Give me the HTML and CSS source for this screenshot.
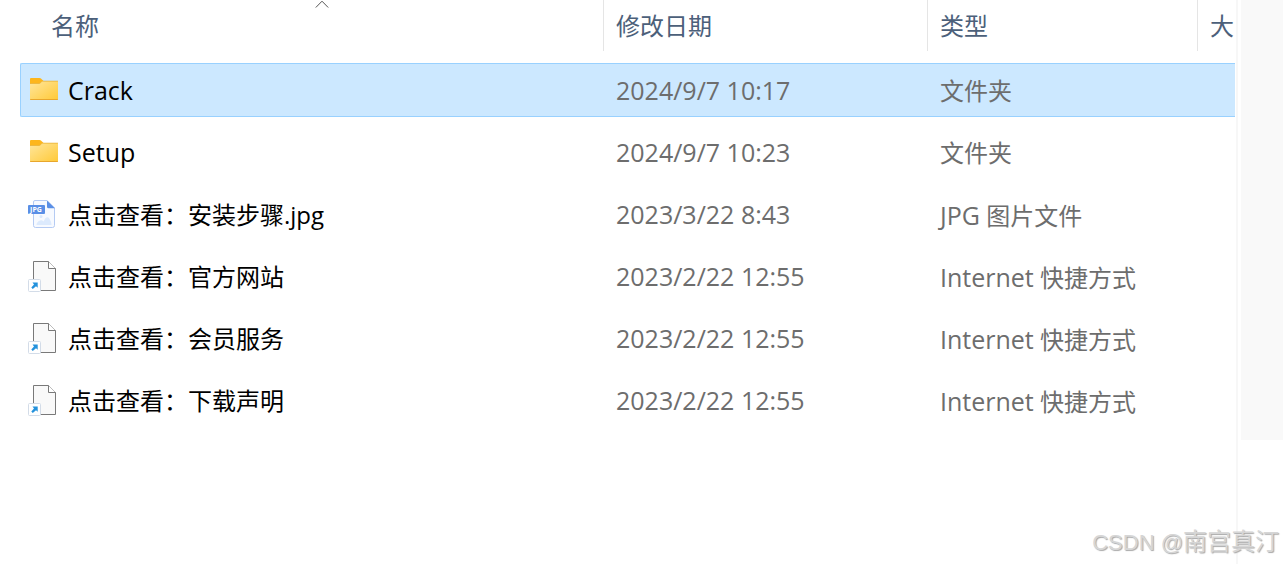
FILE: index.html
```html
<!DOCTYPE html>
<html lang="zh-CN">
<head>
    <meta charset="UTF-8">
    <meta name="viewport" content="width=device-width, initial-scale=1.0">
    <title>文件列表</title>
    <link rel="stylesheet" href="styles.css">
</head>
<body>
    <!-- shared icons -->
    <svg class="icon-defs" aria-hidden="true">
        <defs>
            <linearGradient id="folder-fill" x1="0" y1="0" x2="1" y2="1">
                <stop offset="0" stop-color="#ffe69c"/>
                <stop offset="1" stop-color="#ffc937"/>
            </linearGradient>
        </defs>
        <symbol id="icon-folder" viewBox="0 0 32 32">
            <path d="M2 5q0-1 1-1h8.500q1 0 1.700.700L15.500 7 13 10H2z" fill="#fdb61c"/>
            <path d="M2 10q0-.600.600-.600h8.400q.700 0 1.200-.500l1.500-1.300q.500-.500 1.200-.500H29.400q.600 0 .600.600V25q0 1-1 1H3q-1 0-1-1z" fill="url(#folder-fill)"/>
            <path d="M2 9.500h9q.700 0 1.200-.500l1.500-1.400q.500-.400 1.200-.400H30" fill="none" stroke="#e9b23a" stroke-width=".8"/>
            <path d="M2.200 25.500H29.800" stroke="#e8a62c"/>
        </symbol>
        <symbol id="icon-shortcut" viewBox="0 0 32 32">
            <path d="M5.500 1.500H20.500L27.500 8.500V30.500H5.500z" fill="#f9f9f9" stroke="#797979"/>
            <path d="M20.500 1.500V8.500H27.500" fill="#fff" stroke="#797979"/>
            <rect x=".5" y="19.500" width="12" height="12" rx="1" fill="#fff" stroke="#d3dce8"/>
            <path d="M4.500 22.500H9.700V27.700L8 26.200 4.800 29 3.300 27.600 6 24.500z" fill="#2492dc"/>
        </symbol>
    </svg>

    <div class="window">
        <main class="explorer">
            <table class="file-table">
                <colgroup>
                    <col>
                    <col class="col-date">
                    <col class="col-type">
                    <col class="col-size">
                </colgroup>
                <thead>
                    <tr>
                        <th scope="col" aria-sort="ascending">
                            <button type="button" class="sort-btn sort-btn-name">名称
                                <svg class="sort-caret" viewBox="0 0 14 8" aria-hidden="true"><path d="M.8 7.500 7 1.200 13.200 7.500" fill="none" stroke="#555"/></svg>
                            </button>
                        </th>
                        <th scope="col"><button type="button" class="sort-btn">修改日期</button></th>
                        <th scope="col"><button type="button" class="sort-btn">类型</button></th>
                        <th scope="col"><button type="button" class="sort-btn">大</button></th>
                    </tr>
                </thead>
                <tbody>
                    <tr class="selected">
                        <td><div class="file-name"><svg class="icon"><use href="#icon-folder"/></svg><span class="latin">Crack</span></div></td>
                        <td class="latin">2024/9/7 10:17</td>
                        <td>文件夹</td>
                        <td></td>
                    </tr>
                    <tr>
                        <td><div class="file-name"><svg class="icon"><use href="#icon-folder"/></svg><span class="latin">Setup</span></div></td>
                        <td class="latin">2024/9/7 10:23</td>
                        <td>文件夹</td>
                        <td></td>
                    </tr>
                    <tr>
                        <td>
                            <div class="file-name">
                                <svg class="icon" viewBox="0 0 32 32">
                                    <path d="M7 2.500H19L26.500 10V27.500q0 2-2 2H7.500q-2 0-2-2V4q0-1.500 1.500-1.500z" fill="#f7faff" stroke="#b5cbf3"/>
                                    <path d="M19 2.500 27 10.200H20.500q-1.500 0-1.500-1.500z" fill="#5a8fe6"/>
                                    <circle cx="13" cy="18.500" r="1.500" fill="#d9e8fd"/>
                                    <path d="M8.500 27q0-3 3.500-4.500 2-.800 3.500 1 2-4.500 4-4.300 1.800.200 3.500 4.800.500 1.500.500 3z" fill="#dceafd"/>
                                    <rect x="0" y="7" width="17" height="9" rx="1" fill="#5a8fe6"/>
                                    <text x="8" y="14" class="icon-label">JPG</text>
                                </svg>
                                <span>点击查看：安装步骤.jpg</span>
                            </div>
                        </td>
                        <td class="latin">2023/3/22 8:43</td>
                        <td><span class="latin">JPG</span> 图片文件</td>
                        <td></td>
                    </tr>
                    <tr>
                        <td><div class="file-name"><svg class="icon"><use href="#icon-shortcut"/></svg><span>点击查看：官方网站</span></div></td>
                        <td class="latin">2023/2/22 12:55</td>
                        <td><span class="latin">Internet</span> 快捷方式</td>
                        <td></td>
                    </tr>
                    <tr>
                        <td><div class="file-name"><svg class="icon"><use href="#icon-shortcut"/></svg><span>点击查看：会员服务</span></div></td>
                        <td class="latin">2023/2/22 12:55</td>
                        <td><span class="latin">Internet</span> 快捷方式</td>
                        <td></td>
                    </tr>
                    <tr>
                        <td><div class="file-name"><svg class="icon"><use href="#icon-shortcut"/></svg><span>点击查看：下载声明</span></div></td>
                        <td class="latin">2023/2/22 12:55</td>
                        <td><span class="latin">Internet</span> 快捷方式</td>
                        <td></td>
                    </tr>
                </tbody>
            </table>
        </main>
        <aside class="preview-pane"></aside>
    </div>

    <div class="watermark"><span class="watermark-site">CSDN @</span>南宫真汀</div>
</body>
</html>
```
FILE: styles.css
```css
* {
    margin: 0;
    padding: 0;
    box-sizing: border-box;
}

body {
    font-family: "Open Sans", "Noto Sans CJK SC", sans-serif;
    font-size: 24px;
    line-height: 32px;
    color: #6d6d6d;
    background-color: #fff;
    position: relative;
    min-height: 100vh;
    overflow: hidden;
}

.icon-defs {
    position: absolute;
    width: 0;
    height: 0;
}

.window {
    display: flex;
    gap: 3px;
    min-height: 100vh;
}

.explorer {
    flex: 1;
    min-width: 0;
    padding: 0 1px 0 20px;
    border-right: 2px solid #f7f7f7;
}

.preview-pane {
    width: 42px;
    height: 440px;
    background-color: #f9f9f9;
}

/* file list */
.file-table {
    width: 100%;
    margin-top: -8px;
    table-layout: fixed;
    border-collapse: separate;
    border-spacing: 0 8px;
}

.col-date {
    width: 324px;
}

.col-type {
    width: 270px;
}

.col-size {
    width: 38px;
}

th {
    height: 55px;
    font-weight: normal;
    text-align: left;
    vertical-align: top;
}

.sort-btn {
    display: block;
    position: relative;
    width: 100%;
    height: 51px;
    padding: 1px 0 0 12px;
    border: none;
    border-left: 1px solid #e5e5e5;
    background: none;
    font: inherit;
    color: #4c607a;
    text-align: left;
    white-space: nowrap;
    cursor: pointer;
}

.sort-btn-name {
    padding-left: 31px;
    border-left: none;
}

.sort-caret {
    position: absolute;
    top: 0;
    left: calc(50% + 3px);
    width: 14px;
    height: 8px;
}

td {
    height: 54px;
    padding: 2px 0 0 13px;
    border-top: 1px solid transparent;
    border-bottom: 1px solid transparent;
    vertical-align: middle;
    white-space: nowrap;
}

td.latin {
    padding-top: 0;
}

td:first-child {
    padding: 0 0 0 7px;
    border-left: 1px solid transparent;
    border-radius: 2px 0 0 2px;
}

.selected td {
    background-color: #cce8ff;
    border-color: #99d1ff;
}

.file-name {
    display: flex;
    align-items: center;
    gap: 8px;
    color: #000;
}

.file-name span {
    padding-top: 2px;
}

.file-name .latin {
    padding-top: 0;
}

.icon {
    width: 32px;
    height: 32px;
    flex-shrink: 0;
}

.icon-label {
    font: bold 7px "Open Sans", sans-serif;
    fill: #fff;
    text-anchor: middle;
}

.latin {
    font-size: 25px;
}

.watermark {
    position: absolute;
    right: 4px;
    bottom: 5px;
    font-family: "Liberation Sans", "Noto Sans CJK SC", sans-serif;
    color: #d6d6d6;
    text-shadow: 1px 1px 1px #a8a8a8;
}

.watermark-site {
    font-size: 22px;
}
```
